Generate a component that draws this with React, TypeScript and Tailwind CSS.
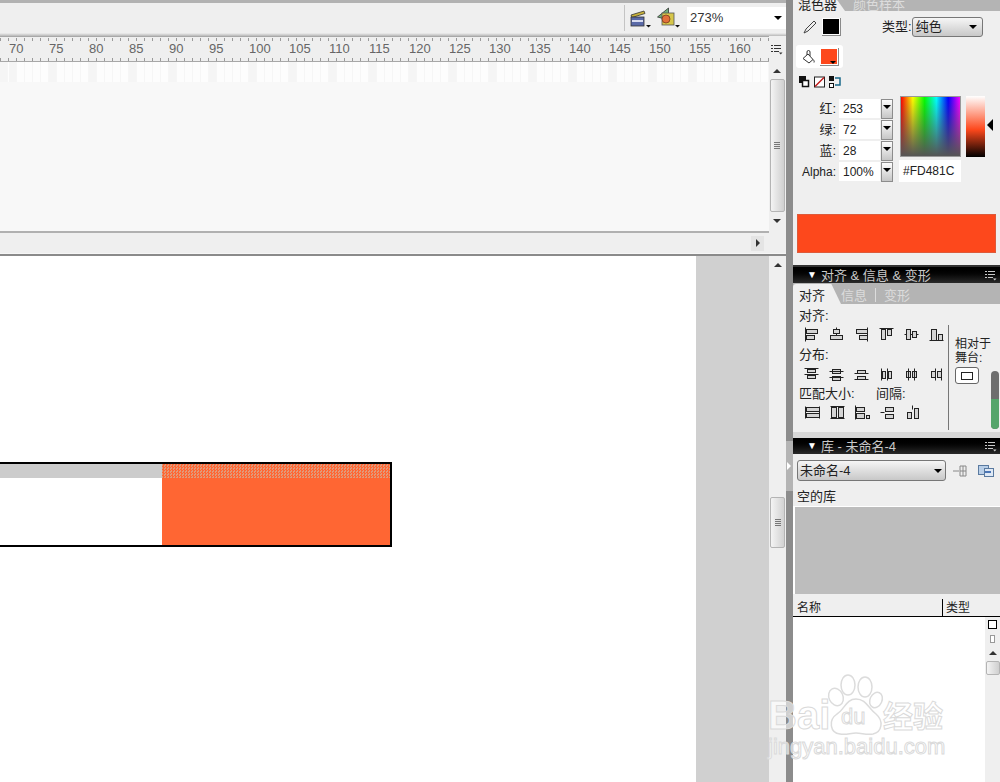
const rulerNums = [70, 75, 80, 85, 90, 95, 100, 105, 110, 115, 120, 125, 130, 135, 140, 145, 150, 155, 160]

type Box = [number, number, number, number]
type Line = [number, number, number, number]
type IconDef = { lines: Line[]; boxes: Box[] }

const alignIcons: IconDef[] = [
  { lines: [[2, 1, 2, 15]], boxes: [[3, 3, 11, 4], [3, 9, 8, 4]] },
  { lines: [[8, 1, 8, 3], [8, 7, 8, 9]], boxes: [[5, 3, 6, 4], [2, 9, 12, 4]] },
  { lines: [[14, 1, 14, 15]], boxes: [[3, 3, 11, 4], [6, 9, 8, 4]] },
  { lines: [[1, 2, 15, 2]], boxes: [[3, 3, 4, 10], [9, 3, 4, 6]] },
  { lines: [[1, 8, 3, 8], [7, 8, 9, 8], [13, 8, 15, 8]], boxes: [[3, 3, 4, 10], [9, 5, 4, 6]] },
  { lines: [[1, 14, 15, 14]], boxes: [[3, 3, 5, 11], [10, 8, 4, 6]] },
]

const distIcons: IconDef[] = [
  { lines: [[1, 2, 15, 2], [1, 8, 15, 8]], boxes: [[4, 3, 8, 3], [4, 9, 8, 3]] },
  { lines: [[1, 5, 15, 5], [1, 11, 15, 11]], boxes: [[4, 3, 8, 4], [4, 10, 8, 4]] },
  { lines: [[1, 7, 15, 7], [1, 13, 15, 13]], boxes: [[4, 4, 8, 3], [4, 10, 8, 3]] },
  { lines: [[3, 2, 3, 14], [9, 2, 9, 14]], boxes: [[4, 5, 3, 7], [10, 5, 3, 7]] },
  { lines: [[5, 2, 5, 14], [11, 2, 11, 14]], boxes: [[3, 5, 4, 6], [9, 5, 4, 6]] },
  { lines: [[7, 2, 7, 14], [13, 2, 13, 14]], boxes: [[3, 5, 4, 6], [9, 5, 4, 6]] },
]

const sizeIcons: IconDef[] = [
  { lines: [[1, 2, 1, 14], [15, 2, 15, 14]], boxes: [[2, 3, 13, 4], [2, 9, 13, 4]] },
  { lines: [[1, 2, 15, 2], [1, 14, 15, 14]], boxes: [[2, 3, 5, 10], [9, 3, 5, 10]] },
  { lines: [[1, 1, 1, 15]], boxes: [[2, 3, 8, 4], [2, 9, 8, 5], [12, 11, 3, 3]] },
  { lines: [[1, 8, 5, 8]], boxes: [[6, 3, 8, 4], [6, 10, 8, 4]] },
  { lines: [[8, 1, 8, 5]], boxes: [[3, 8, 4, 6], [10, 4, 4, 10]] },
]

function AlignIcon({ def }: { def: IconDef }) {
  return (
    <svg width="16" height="16" viewBox="0 0 16 16" fill="#d4d4d4" stroke="#222222" strokeWidth="1">
      {def.boxes.map((b, i) => (
        <rect key={i} x={b[0] + 0.5} y={b[1] + 0.5} width={b[2]} height={b[3]} />
      ))}
      {def.lines.map((l, i) => (
        <line key={i} x1={l[0] + 0.5} y1={l[1] + 0.5} x2={l[2] + 0.5} y2={l[3] + 0.5} />
      ))}
    </svg>
  )
}

function IconRow({ icons }: { icons: IconDef[] }) {
  return (
    <div className="flex h-[16px] items-center">
      {icons.map((def, i) => (
        <div key={i} className="flex w-[25.200px] justify-center">
          <AlignIcon def={def} />
        </div>
      ))}
    </div>
  )
}

function PanelHeader({ title }: { title: string }) {
  return (
    <div className="flex h-[16px] items-center justify-between bg-gradient-to-b from-[#000000] to-[#2a2a2a] pr-[3px] pl-[14px] text-[13px] text-[#c9c9c9]">
      <span className="flex items-center gap-[4px] leading-none">
        <span className="text-[10px] text-white">▼</span>
        {title}
      </span>
      <MenuIcon light />
    </div>
  )
}

function MenuIcon({ light }: { light?: boolean }) {
  const c = light ? '#c8c8c8' : '#333333'
  return (
    <svg width="13" height="12" viewBox="0 0 13 12" fill="none" stroke={c} strokeWidth="1">
      <path d="M1 2.500h2M1 5.500h2M1 8.500h2M4 2.500h7M4 5.500h7M4 8.500h5" />
      <path d="M9 9.500h3.500l-1.750 2z" fill={c} stroke="none" />
    </svg>
  )
}

function Spin({ value }: { value: string }) {
  return (
    <div className="flex h-[21px] items-center">
      <div className="flex h-[19px] w-[41px] items-center bg-white pl-[4px] text-[12px] text-[#222222]">{value}</div>
      <div className="ml-[1px] flex h-[20px] w-[12px] flex-col items-center border border-[#8c8c8c] bg-gradient-to-b from-[#fdfdfd] to-[#c6c6c6] pt-[5px]">
        <div className="h-0 w-0 border-x-[4px] border-t-[4px] border-x-transparent border-t-black" />
      </div>
    </div>
  )
}

function Swatch({ color }: { color: string }) {
  return (
    <div className="relative h-[18px] w-[19px] border-r border-b border-[#8a8a8a] bg-white p-[1px]">
      <div className={`h-full w-full ${color}`} />
      <div className="absolute right-[2px] bottom-[1px] h-0 w-0 border-x-[3px] border-t-[3px] border-x-transparent border-t-black" />
    </div>
  )
}

function Caret({ up, className }: { up?: boolean; className?: string }) {
  return (
    <div
      className={`h-0 w-0 border-x-[4px] border-x-transparent ${
        up ? 'border-b-[4px] border-b-[#333333]' : 'border-t-[4px] border-t-[#333333]'
      } ${className ?? ''}`}
    />
  )
}

function Grip() {
  return (
    <div className="flex flex-col gap-[1px]">
      <div className="h-[1px] w-[6px] bg-[#777777]" />
      <div className="h-[1px] w-[6px] bg-[#777777]" />
      <div className="h-[1px] w-[6px] bg-[#777777]" />
      <div className="h-[1px] w-[6px] bg-[#777777]" />
    </div>
  )
}

function Watermark() {
  return (
    <div className="pointer-events-none absolute top-[672px] left-[760px] h-[100px] w-[200px] select-none">
      <svg className="absolute top-0 left-0" width="200" height="70" viewBox="0 0 200 70" fill="#ffffff" fillOpacity="0.55" stroke="#dcdcdc" strokeWidth="1.500">
        <ellipse cx="76" cy="25" rx="7" ry="9" transform="rotate(-25 76 25)" />
        <ellipse cx="88" cy="13" rx="7" ry="10" />
        <ellipse cx="105" cy="15" rx="7" ry="10" />
        <ellipse cx="116" cy="28" rx="6" ry="8" transform="rotate(25 116 28)" />
        <path d="M96 27c-10 0-11 10-19 15c-9 6-7 19 3 20c7 1 10-1 16-1s10 2 17 1c9-2 11-13 3-20c-8-6-10-15-20-15z" />
      </svg>
      <span className="absolute top-[23px] left-[8px] font-['Liberation_Sans',sans-serif] text-[40px] leading-none font-bold text-white/60 [-webkit-text-stroke:1px_#dadada]">
        Bai
      </span>
      <span className="absolute top-[34px] left-[81px] font-['Liberation_Sans',sans-serif] text-[22px] leading-none text-white/60 [-webkit-text-stroke:1px_#dadada]">
        du
      </span>
      <span className="absolute top-[27px] left-[123px] font-['Noto_Sans_CJK_SC',sans-serif] text-[30px] leading-none font-bold text-white/60 [-webkit-text-stroke:1px_#dadada]">
        经验
      </span>
      <span className="absolute top-[64px] left-[8px] font-['Liberation_Sans',sans-serif] text-[22px] leading-none text-white/60 [-webkit-text-stroke:1px_#dadada]">
        jingyan.baidu.com
      </span>
    </div>
  )
}

export default function App() {
  return (
    <div className="relative flex h-[782px] w-[1000px] overflow-hidden bg-white font-['Liberation_Sans','Noto_Sans_CJK_SC',sans-serif] text-[12px] text-[#222222]">
      {/* main column */}
      <div className="flex w-[786px] flex-col">
        <div className="h-[3px] bg-[#b2b2b2]" />

        <div className="flex h-[30px] items-center justify-end bg-[#efefef]">
          <div className="mr-[4px] h-[26px] w-[1px] bg-[#c4c4c4]" />
          <svg width="22" height="20" viewBox="0 0 22 20" className="mr-[6px]">
            <path d="M2 7l13-4 1 2.500-13 4z" fill="#c9b23a" stroke="#333333" strokeWidth="0.800" />
            <rect x="2" y="9" width="13" height="9" fill="#5a6aa8" stroke="#333333" strokeWidth="0.800" />
            <rect x="3" y="12" width="11" height="2" fill="#d8dcf0" />
            <path d="M17 17h5l-2.500 2.500z" fill="#111111" />
          </svg>
          <svg width="24" height="22" viewBox="0 0 24 22" className="mr-[6px]">
            <path d="M0.500 10l11-9v12z" fill="#6fae7a" stroke="#333333" strokeWidth="0.800" />
            <rect x="5" y="6" width="12" height="12" fill="#d6c64a" stroke="#555555" strokeWidth="0.800" />
            <circle cx="9" cy="12" r="4" fill="#e2703a" stroke="#7a3a1a" strokeWidth="0.800" />
            <path d="M18 18h5l-2.500 2.500z" fill="#111111" />
          </svg>
          <div className="flex h-[22px] w-[99px] items-center justify-between bg-white pr-[4px] pl-[3px] text-[13px] text-[#333333]">
            <span>273%</span>
            <div className="h-0 w-0 border-x-[4px] border-t-[4px] border-x-transparent border-t-black" />
          </div>
        </div>

        <div className="h-[3px] bg-gradient-to-b from-[#efefef] to-[#b8b8b8]" />

        <div className="flex h-[26px]">
          <div className="relative flex flex-1 items-center overflow-hidden border-y border-[#a8a8a8] bg-[#efefef]">
            <div className="absolute top-[1px] right-0 left-0 h-[3px] bg-[repeating-linear-gradient(to_right,#9a9a9a_0,#9a9a9a_1px,transparent_1px,transparent_8px)]" />
            <div className="absolute right-0 bottom-0 left-0 h-[3px] bg-[repeating-linear-gradient(to_right,#9a9a9a_0,#9a9a9a_1px,transparent_1px,transparent_8px)]" />
            <div className="ml-[9px] flex text-[13px] text-[#666666]">
              {rulerNums.map((n) => (
                <span key={n} className="w-[40px] shrink-0 text-left">
                  {n}
                </span>
              ))}
            </div>
          </div>
          <div className="flex w-[17px] items-center justify-center bg-[#efefef] pr-[2px]">
            <MenuIcon />
          </div>
        </div>

        <div className="flex h-[171px]">
          <div className="flex flex-1 flex-col">
            <div className="h-[20px] bg-[repeating-linear-gradient(to_right,transparent_0,transparent_7px,#f6f6f6_7px,#f6f6f6_8px),repeating-linear-gradient(to_right,#f5f5f5_0,#f5f5f5_8px,#fdfdfd_8px,#fdfdfd_40px)] bg-[position:9px_0]" />
            <div className="flex-1 bg-[#f8f8f8]" />
            <div className="h-[2px] bg-[#b0b0b0]" />
          </div>
          <div className="flex w-[17px] flex-col items-center bg-[#efefef] pr-[1px]">
            <Caret up className="mt-[7px] mb-[6px]" />
            <div className="flex h-[133px] w-[15px] items-center justify-center rounded-[2px] border border-[#b4b4b4] bg-gradient-to-r from-[#f4f4f4] to-[#cfcfcf]">
              <Grip />
            </div>
            <Caret className="mt-[7px]" />
          </div>
        </div>

        <div className="flex h-[20px] items-center justify-end bg-[#efefef] pr-[22px]">
          <div className="flex h-[15px] w-[13px] items-center justify-center bg-[#e4e4e4]">
            <div className="h-0 w-0 border-y-[4px] border-l-[4px] border-y-transparent border-l-[#333333]" />
          </div>
        </div>

        <div className="h-[1px] bg-[#f6f6f6]" />
        <div className="h-[2px] bg-[#8a8a8a]" />

        <div className="flex flex-1">
          <div className="relative flex-1 bg-white">
            {/* shape on the stage */}
            <div className="absolute top-[206px] left-0 flex h-[85px] w-[392px] flex-col border-y-2 border-r-2 border-black">
              <div className="flex h-[14px]">
                <div className="w-[162px] bg-[#cccccc]" />
                <div className="flex-1 bg-[repeating-conic-gradient(#ff6633_0_25%,#e09a7a_0_50%)] bg-[length:3px_3px]" />
              </div>
              <div className="flex flex-1">
                <div className="w-[162px] bg-white" />
                <div className="flex-1 bg-[#ff6633]" />
              </div>
            </div>
          </div>
          <div className="w-[73px] bg-[#d0d0d0]" />
          <div className="flex w-[17px] flex-col items-center bg-[#efefef]">
            <Caret up className="mt-[7px]" />
            <div className="mt-[230px] flex h-[51px] w-[15px] items-center justify-center rounded-[2px] border border-[#b4b4b4] bg-gradient-to-r from-[#f4f4f4] to-[#d2d2d2]">
              <Grip />
            </div>
          </div>
        </div>
      </div>

      {/* divider */}
      <div className="flex w-[7px] flex-col bg-[#8c8c8c]">
        <div className="mt-[441px] flex h-[50px] w-full items-center bg-[#b4b4b4] pl-[1px]">
          <div className="h-0 w-0 border-y-[4px] border-l-[4px] border-y-transparent border-l-white" />
        </div>
      </div>

      {/* panels */}
      <div className="flex w-[207px] flex-col bg-[#efefef]">
        <div className="flex h-[11px] overflow-hidden bg-[#b4b4b4] text-[13px] leading-[9px]">
          <div className="w-[52px] bg-[#efefef] pl-[5px] text-[#222222] [clip-path:polygon(0_0,85%_0,100%_100%,0_100%)]">混色器</div>
          <div className="pl-[8px] text-[#dcdcdc]">颜色样本</div>
        </div>

        <div className="flex h-[34px] items-center pb-[3px]">
          <svg width="16" height="16" viewBox="0 0 16 16" className="ml-[9px]" fill="none" stroke="#444444">
            <path d="M2 14l2-4 8-8 2 2-8 8z" />
          </svg>
          <div className="ml-[4px]">
            <Swatch color="bg-black" />
          </div>
          <span className="ml-[41px] text-[13px]">类型:</span>
          <div className="flex h-[20px] w-[71px] items-center justify-between rounded-[3px] border border-[#777777] bg-gradient-to-b from-[#f6f6f6] to-[#c8c8c8] pr-[5px] pl-[3px] text-[13px]">
            <span>纯色</span>
            <div className="h-0 w-0 border-x-[4px] border-t-[4px] border-x-transparent border-t-black" />
          </div>
        </div>

        <div className="ml-[3px] flex h-[23px] w-[47px] items-center gap-[3px] rounded-[3px] bg-white pl-[5px]">
          <svg width="16" height="16" viewBox="0 0 16 16" fill="none" stroke="#333333">
            <path d="M2 9.500l5-4.500 5 5.500-4 3.500zM6 6V3a1.500 1.500 0 0 1 3 0v4M12 10.500c1 .800 1.500 2 1 3" />
          </svg>
          <Swatch color="bg-[#fd481c]" />
        </div>

        <div className="ml-[6px] flex h-[28px] items-center gap-[4px]">
          <svg width="11" height="12" viewBox="0 0 11 12">
            <rect x="0" y="0" width="7" height="7" fill="#111111" />
            <rect x="3.500" y="4.500" width="6" height="6" fill="#ffffff" stroke="#111111" strokeWidth="1.500" />
          </svg>
          <svg width="11" height="12" viewBox="0 0 11 12">
            <rect x="0.500" y="1" width="10" height="10" fill="#ffffff" stroke="#222222" />
            <line x1="1" y1="10.500" x2="10" y2="1.500" stroke="#c01818" strokeWidth="1.500" />
          </svg>
          <svg width="13" height="12" viewBox="0 0 13 12">
            <rect x="0.500" y="0.500" width="4" height="4" fill="#111111" stroke="#111111" />
            <rect x="0.500" y="7.500" width="4" height="4" fill="#ffffff" stroke="#111111" />
            <path d="M6 2h5v7H6" fill="none" stroke="#1a6a8a" strokeWidth="1.500" />
          </svg>
        </div>

        <div className="flex h-[118px]">
          <div className="flex w-[107px] flex-col items-end pt-[2px] pr-[7px] text-[13px]">
            {[
              ['红:', '253'],
              ['绿:', '72'],
              ['蓝:', '28'],
              ['Alpha:', '100%'],
            ].map(([label, value]) => (
              <div key={label} className="flex items-center gap-[3px]">
                <span className={label === 'Alpha:' ? 'text-[12px]' : ''}>{label}</span>
                <Spin value={value} />
              </div>
            ))}
          </div>
          <div className="flex flex-col">
            <div className="flex items-start">
              <div className="h-[61px] w-[61px] border border-[#999999] bg-[linear-gradient(to_bottom,transparent,#555555),linear-gradient(to_right,#ff0000,#ffff00,#00ff00,#00ffff,#0000ff,#ff00ff)]" />
              <div className="ml-[5px] h-[61px] w-[19px] bg-[linear-gradient(to_bottom,#ffffff,#fd481c_55%,#000000)]" />
              <div className="mt-[23px] ml-[2px] h-0 w-0 border-y-[6px] border-r-[6px] border-y-transparent border-r-black" />
            </div>
            <div className="mt-[3px] ml-[-1px] flex h-[22px] w-[62px] items-center bg-white pl-[4px] text-[12px]">#FD481C</div>
          </div>
        </div>

        <div className="mx-[4px] h-[39px] border border-[#dd5a3a] bg-[#fd481c]" />

        <div className="mt-[12px] h-[2px] bg-[#333333]" />
        <PanelHeader title="对齐 & 信息 & 变形" />

        <div className="flex h-[21px] items-end bg-[#b4b4b4] text-[13px]">
          <div className="flex h-[20px] w-[48px] items-center rounded-tl-[3px] bg-[#efefef] pt-[4px] pl-[6px] [clip-path:polygon(0_0,80%_0,100%_100%,0_100%)]">对齐</div>
          <span className="flex h-[20px] items-center pt-[4px] text-[#dcdcdc]">信息</span>
          <div className="mx-[8px] mb-[2px] h-[14px] w-[1px] bg-[#dcdcdc]" />
          <span className="flex h-[20px] items-center pt-[4px] text-[#dcdcdc]">变形</span>
        </div>

        <div className="flex h-[128px]">
          <div className="flex w-[155px] flex-col pl-[6px] text-[13px]">
            <div className="mt-[3px] h-[19px] leading-[18px]">对齐:</div>
            <div className="mb-[1px]">
              <IconRow icons={alignIcons} />
            </div>
            <div className="h-[23px] leading-[24px]">分布:</div>
            <IconRow icons={distIcons} />
            <div className="flex h-[22px] leading-[24px]">
              <span className="w-[77px]">匹配大小:</span>
              <span>间隔:</span>
            </div>
            <IconRow icons={sizeIcons} />
          </div>
          <div className="mt-[21px] mb-[2px] w-[1px] bg-[#777777]" />
          <div className="flex flex-1 flex-col pl-[6px]">
            <div className="mt-[33px] text-[12px] leading-[14px]">
              相对于
              <br />
              舞台:
            </div>
            <div className="flex items-start">
              <div className="mt-[2px] flex h-[17px] w-[24px] items-center justify-center rounded-[3px] border border-[#666666] bg-white">
                <div className="h-[8px] w-[12px] border border-[#222222]" />
              </div>
              <div className="mt-[6px] ml-[12px] h-[58px] w-[8px] overflow-hidden rounded-[4px] bg-[#6e6e6e]">
                <div className="mt-[28px] h-[30px] bg-[#55a56b]" />
              </div>
            </div>
          </div>
        </div>

        <div className="h-[6px] bg-[#d8d8d8]" />
        <PanelHeader title="库 - 未命名-4" />

        <div className="flex h-[33px] items-center pl-[4px]">
          <div className="flex h-[21px] w-[149px] items-center justify-between rounded-[3px] border border-[#777777] bg-gradient-to-b from-[#f6f6f6] to-[#c8c8c8] pr-[3px] pl-[2px] text-[13px]">
            <span>未命名-4</span>
            <div className="h-0 w-0 border-x-[4px] border-t-[4px] border-x-transparent border-t-black" />
          </div>
          <svg width="16" height="14" viewBox="0 0 16 14" className="ml-[6px]" fill="none" stroke="#888888">
            <path d="M1 7h6M8 2h6v10H8zM8 7h6M11 2v10" />
          </svg>
          <svg width="16" height="14" viewBox="0 0 16 14" className="ml-[10px]">
            <rect x="0.500" y="1.500" width="10" height="9" fill="#b9cfe8" stroke="#5a7aa0" />
            <rect x="6.500" y="4.500" width="9" height="8" fill="#dfe9f5" stroke="#5a7aa0" />
            <path d="M7 8h6" stroke="#1a4fa0" strokeWidth="1.500" />
          </svg>
        </div>

        <div className="h-[19px] pl-[4px] text-[13px] leading-[19px]">空的库</div>
        <div className="h-[88px] border-t border-l-2 border-white bg-[#bdbdbd]" />

        <div className="mt-[5px] flex h-[18px] border-b border-black text-[12px] leading-[18px]">
          <div className="w-[150px] border-r border-black pl-[4px]">名称</div>
          <div className="pl-[3px]">类型</div>
        </div>

        <div className="flex flex-1">
          <div className="flex-1 bg-white" />
          <div className="flex w-[15px] flex-col items-center bg-[#efefef]">
            <div className="mt-[3px] h-[9px] w-[9px] border border-black bg-white" />
            <div className="mt-[6px] h-[8px] w-[5px] border border-[#999999] bg-white" />
            <Caret up className="mt-[8px] mb-[6px]" />
            <div className="h-[14px] w-[14px] rounded-[2px] border border-[#b4b4b4] bg-gradient-to-r from-[#f4f4f4] to-[#cfcfcf]" />
          </div>
        </div>
      </div>

      <Watermark />
    </div>
  )
}
